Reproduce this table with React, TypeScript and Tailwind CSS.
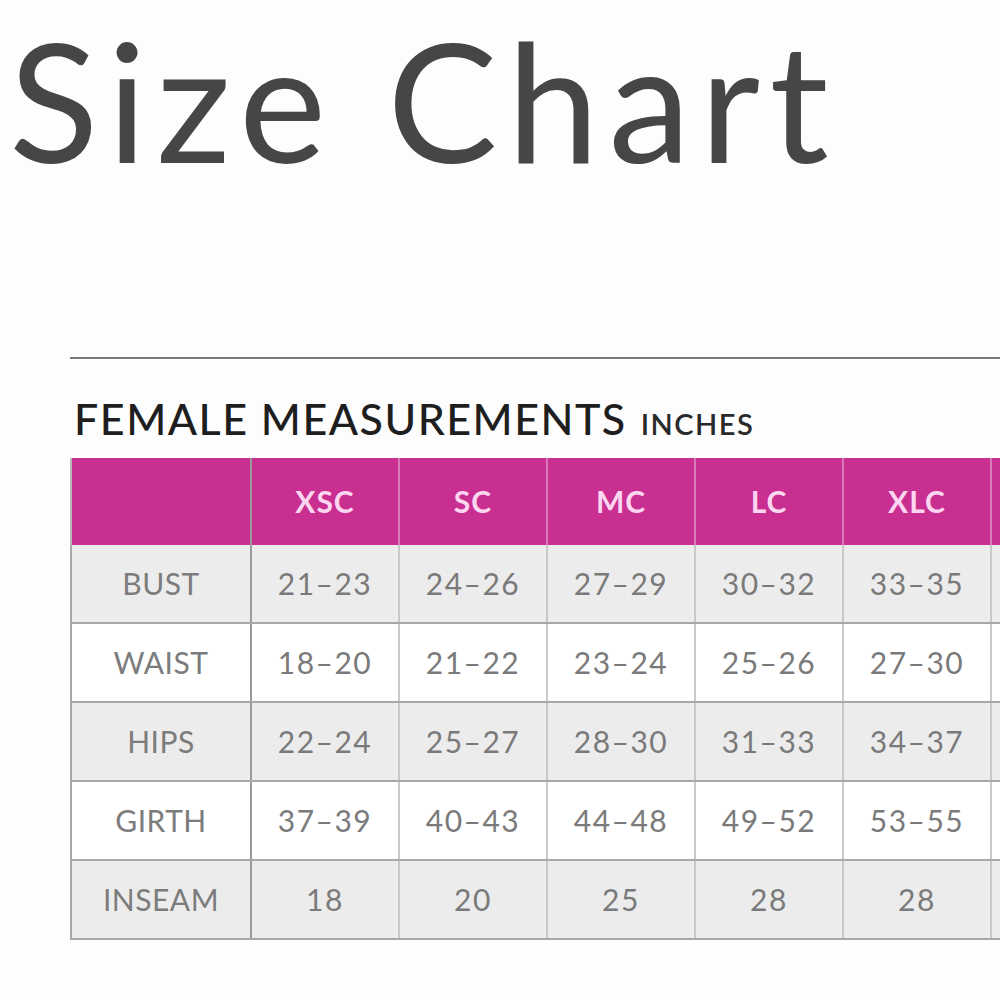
import React from "react";

const sizes = ["XSC", "SC", "MC", "LC", "XLC"];
const rows: { label: string; vals: string[]; gray: boolean }[] = [
  { label: "BUST", vals: ["21–23", "24–26", "27–29", "30–32", "33–35"], gray: true },
  { label: "WAIST", vals: ["18–20", "21–22", "23–24", "25–26", "27–30"], gray: false },
  { label: "HIPS", vals: ["22–24", "25–27", "28–30", "31–33", "34–37"], gray: true },
  { label: "GIRTH", vals: ["37–39", "40–43", "44–48", "49–52", "53–55"], gray: false },
  { label: "INSEAM", vals: ["18", "20", "25", "28", "28"], gray: true },
];

export default function App() {
  return (
    <div
      className="w-[1000px] h-[1000px] overflow-hidden bg-[#fdfdfd]"
      style={{ fontFamily: "Lato, 'Open Sans', sans-serif" }}
    >
      <h1 className="pl-[9px] h-[198px] text-[165px] leading-[1.2] font-normal text-[#464646] tracking-[9.5px] whitespace-nowrap">
        Size Chart
      </h1>
      <div className="mt-[159px] ml-[70px] w-[930px] border-t-2 border-[#7a7a7a]" />
      <div className="ml-[74px] mt-[38px] flex items-baseline whitespace-nowrap text-[#1e1e1e]">
        <span className="text-[43px] leading-none tracking-[1.5px] font-medium">FEMALE MEASUREMENTS</span>
        <span className="ml-[14px] text-[29px] leading-none tracking-[1.5px] font-semibold text-[#2a2a2a]">INCHES</span>
      </div>
      <div className="ml-[70px] mt-[18px] w-[930px] overflow-hidden">
        <div className="flex h-[87px] bg-[#c92f91] border-l-2 border-[#b9b9b9]">
          <div className="w-[180px] shrink-0 border-r-2 border-[#9a9a9a]" />
          {sizes.map((s) => (
            <div
              key={s}
              className="w-[148px] shrink-0 border-r-2 border-[#d77cb8] flex items-center justify-center text-[30px] font-bold text-[#fcd6f0] tracking-[1px]"
            >
              {s}
            </div>
          ))}
          <div className="w-[148px] shrink-0" />
        </div>
        {rows.map((r) => (
          <div
            key={r.label}
            className={`flex h-[79px] border-l-2 border-b-2 border-[#a8a8a8] ${r.gray ? "bg-[#ececec]" : "bg-white"}`}
          >
            <div className="w-[180px] shrink-0 border-r-2 border-[#9a9a9a] flex items-center justify-center text-[30px] text-[#7c7c7c] tracking-[0.5px]">
              {r.label}
            </div>
            {r.vals.map((v, i) => (
              <div
                key={i}
                className="w-[148px] shrink-0 border-r-2 border-[#c8c8c8] flex items-center justify-center text-[30px] text-[#7a7a7a] tracking-[1.5px]"
              >
                {v}
              </div>
            ))}
            <div className="w-[148px] shrink-0" />
          </div>
        ))}
      </div>
    </div>
  );
}
